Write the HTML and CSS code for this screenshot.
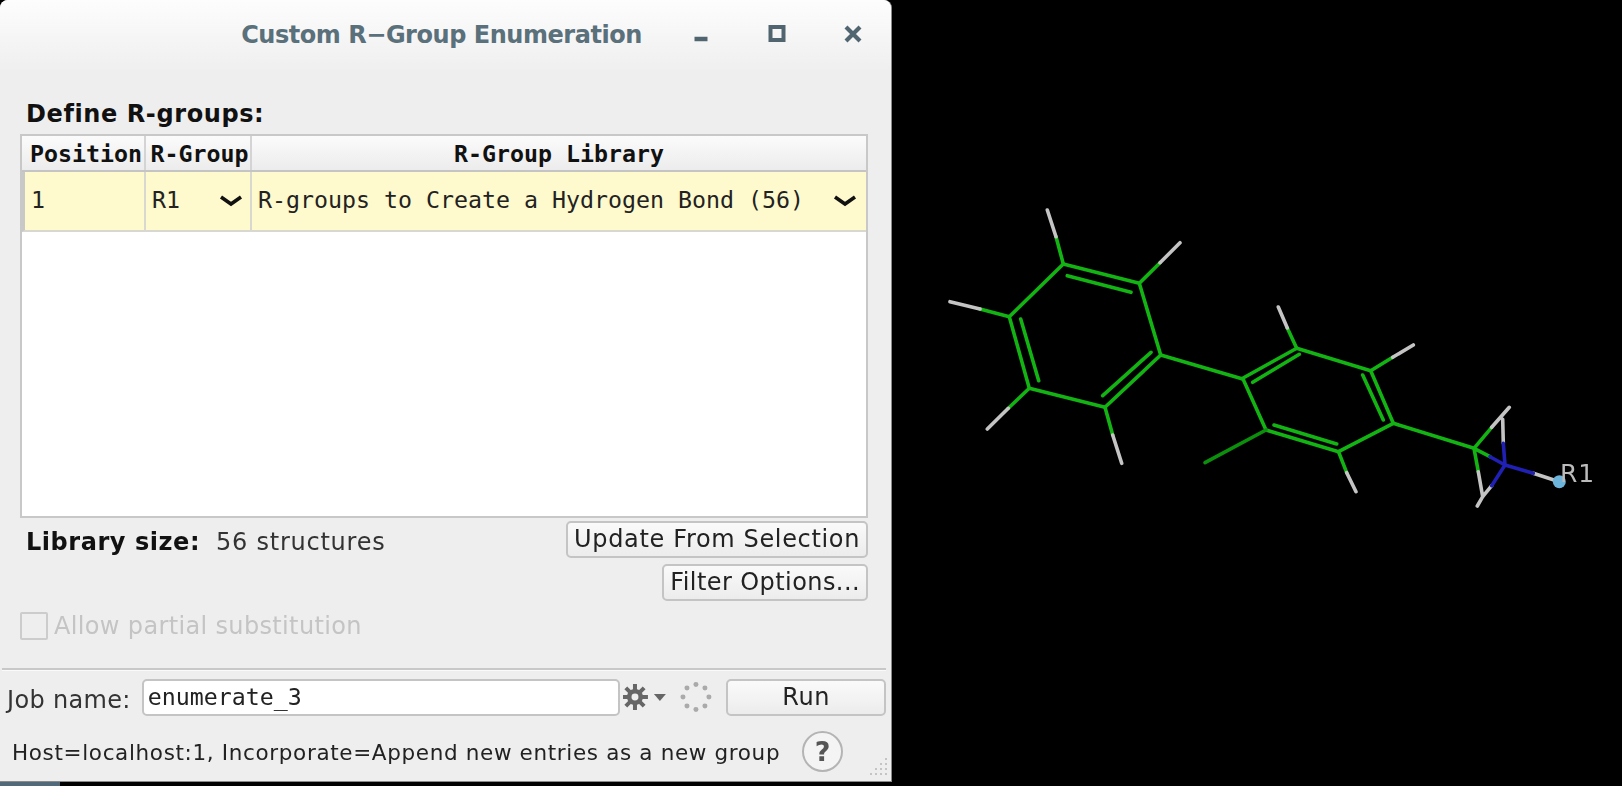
FILE: index.html
```html
<!DOCTYPE html>
<html lang="en">
<head>
  <meta charset="UTF-8" />
  <title>Custom R-Group Enumeration</title>
  <link rel="stylesheet" href="styles.css">
</head>
<body>

  <div class="left-column">
    <div class="window">
      <div class="titlebar">
        <span class="title">Custom R&minus;Group Enumeration</span>
        <div class="win-buttons">
          <svg class="win-btn" viewBox="0 0 20 20"><path d="M3.500 15h13" stroke="#50656f" stroke-width="4.500"/></svg>
          <svg class="win-btn" viewBox="0 0 20 20"><rect x="3.500" y="3" width="13" height="13" fill="none" stroke="#50656f" stroke-width="4"/></svg>
          <svg class="win-btn" viewBox="0 0 20 20"><path d="M3 3l14 14M17 3l-14 14" stroke="#50656f" stroke-width="4.200"/></svg>
        </div>
      </div>

      <div class="content">
        <div class="section-label">Define R-groups:</div>

        <div class="table">
          <div class="thead">
            <div class="th col-pos">Position</div>
            <div class="th col-group">R-Group</div>
            <div class="th col-lib">R-Group Library</div>
          </div>
          <div class="row">
            <div class="td col-pos">1</div>
            <div class="td col-group">R1
              <svg class="chevron" viewBox="0 0 24 12"><path d="M2 2l10 7 10-7" fill="none" stroke="#111" stroke-width="3.600"/></svg>
            </div>
            <div class="td col-lib">R-groups to Create a Hydrogen Bond (56)
              <svg class="chevron" viewBox="0 0 24 12"><path d="M2 2l10 7 10-7" fill="none" stroke="#111" stroke-width="3.600"/></svg>
            </div>
          </div>
        </div>

        <div class="library-row">
          <div class="library-size"><b>Library size:</b><span>56 structures</span></div>
          <div class="library-buttons">
            <button class="btn">Update From Selection</button>
            <button class="btn btn-filter">Filter Options...</button>
          </div>
        </div>

        <label class="check-row">
          <span class="checkbox"></span>
          <span>Allow partial substitution</span>
        </label>
      </div>

      <div class="job-bar">
        <span class="job-label">Job name:</span>
        <div class="job-input">enumerate_3</div>
        <svg class="gear" viewBox="0 0 44 28">
          <g fill="#666">
            <circle cx="12" cy="14" r="8"/>
            <path d="M10 1h4v26h-4zM-1 12h26v4H-1z"/>
            <path d="M10 1h4v26h-4zM-1 12h26v4H-1z" transform="rotate(45 12 14)"/>
            <path d="M31 11h12l-6 7z"/>
          </g>
          <circle cx="12" cy="14" r="3.500" fill="#eee"/>
        </svg>
        <svg class="spinner" viewBox="0 0 32 32">
          <g fill="#aaa">
            <circle cx="16" cy="3.500" r="2.500"/><circle cx="25" cy="7" r="2.500"/>
            <circle cx="29" cy="16" r="2.500"/><circle cx="25" cy="25" r="2.500"/>
            <circle cx="16" cy="28.500" r="2.500"/><circle cx="7" cy="25" r="2.500"/>
            <circle cx="3" cy="16" r="2.500"/><circle cx="7" cy="7" r="2.500"/>
          </g>
        </svg>
        <button class="btn btn-run">Run</button>
      </div>

      <div class="status-bar">
        <span class="status-text">Host=localhost:1, Incorporate=Append new entries as a new group</span>
        <span class="help">?</span>
        <svg class="grip" viewBox="0 0 22 22">
          <g fill="#c4c4c4">
            <rect x="18" y="2" width="2" height="2"/>
            <rect x="13" y="7" width="2" height="2"/><rect x="18" y="7" width="2" height="2"/>
            <rect x="8" y="12" width="2" height="2"/><rect x="13" y="12" width="2" height="2"/><rect x="18" y="12" width="2" height="2"/>
            <rect x="3" y="17" width="2" height="2"/><rect x="8" y="17" width="2" height="2"/><rect x="13" y="17" width="2" height="2"/><rect x="18" y="17" width="2" height="2"/>
          </g>
        </svg>
      </div>
    </div>
    <div class="desktop-strip"></div>
  </div>

  <div class="viewer">
    <svg class="molecule" viewBox="892 0 730 786">
      <!-- left ring -->
      <g class="bond-c">
        <path d="M1063.300 264L1139.300 283.300L1160.700 355L1105 407.300L1029.300 388.300L1009.300 316.700Z"/>
        <path d="M1067.300 275.700L1131 292.300M1020.700 319L1038.700 380.700M1151 352.300L1102.700 395.700"/>
        <path d="M1160.700 355L1242.700 379"/>
        <path d="M1063.300 264L1056 236.700M1139.300 283.300L1160 262.700M1009.300 316.700L980 309M1029.300 388.300L1008.300 408.300M1105 407.300L1112.700 435"/>
      </g>
      <g class="bond-h">
        <path d="M1056 236.700L1047.300 210M1160 262.700L1180 242.700M980 309L950 301.700M1008.300 408.300L987.300 429M1112.700 435L1121.700 463.300"/>
      </g>
      <!-- right ring -->
      <g class="bond-c">
        <path d="M1242.700 378.300L1296.700 348.300L1370.700 370.700L1393.300 423.300L1338.500 451.700L1266 430Z"/>
        <path d="M1252.700 382.300L1299.300 354.300M1362.700 375L1383.300 420M1274 425L1336.700 444"/>
        <path d="M1393.300 423.300L1474 448.300"/>
        <path d="M1296.700 348.300L1287.300 328M1370.700 370.700L1392.700 357.300M1338.500 451.700L1346.700 472.700"/>
      </g>
      <path class="bond-dark" d="M1266 430L1205 462.700"/>
      <g class="bond-h">
        <path d="M1287.300 328L1278.300 307M1392.700 357.300L1413.300 345M1346.700 472.700L1356 491.700"/>
      </g>
      <!-- R1 end -->
      <g class="bond-c">
        <path d="M1474 448.300L1491.700 427.300M1474 448.300L1478.300 471.700M1474 448.300L1490 456.700"/>
      </g>
      <g class="bond-h">
        <path d="M1491.700 427.300L1509.300 407.300M1478.300 471.700L1482.700 496.700M1503.300 443.300L1502.700 419.300M1491.700 485.700L1482.700 496.700L1477.300 506M1533.300 473.300L1559.300 481.700"/>
      </g>
      <g class="bond-n">
        <path d="M1490 456.700L1505 465M1505 465L1503.300 443.300M1505 465L1491.700 485.700M1505 465L1533.300 473.300"/>
      </g>
      <circle class="r-dot" cx="1559.300" cy="481.700" r="6.500"/>
      <text class="r-label" x="1560" y="481.500">R1</text>
    </svg>
  </div>

</body>
</html>
```

FILE: styles.css
```css
* {
  box-sizing: border-box;
}

html, body {
  height: 100%;
}

body {
  margin: 0;
  background: #000;
  display: flex;
  overflow: hidden;
  font-family: 'DejaVu Sans', sans-serif;
  font-size: 24px;
  color: #222;
}

.left-column {
  width: 892px;
  flex: none;
}

.window {
  height: 782px;
  display: flex;
  flex-direction: column;
  background: #eeeeee;
  border-right: 1px solid #8a8a8a;
  border-bottom: 1px solid #8a8a8a;
  border-radius: 8px 8px 0 0;
  filter: blur(0.4px);
}

.desktop-strip {
  width: 60px;
  height: 4px;
  background: #52697a;
}

.titlebar {
  height: 70px;
  flex: none;
  position: relative;
  background: linear-gradient(to bottom, #fdfdfd, #efefef);
  border-radius: 8px 8px 0 0;
  display: flex;
  align-items: center;
  justify-content: center;
}

.title {
  font-weight: bold;
  font-size: 24px;
  letter-spacing: -0.46px;
  color: #5a707a;
  margin-right: 8px;
}

.win-buttons {
  position: absolute;
  top: 24px;
  right: 28px;
  display: flex;
  gap: 56px;
}

.win-btn {
  width: 20px;
  height: 20px;
}

.content {
  flex: 1;
  padding: 29px 23px 0 20px;
}

.section-label {
  font-weight: bold;
  letter-spacing: 0.6px;
  margin-left: 6px;
  height: 35px;
  line-height: 31px;
  color: #111;
}

.table {
  height: 384px;
  background: #fff;
  border: 2px solid #c8c8c8;
  font-family: 'DejaVu Sans Mono', monospace;
  font-size: 23.25px;
}

.thead {
  display: flex;
  height: 36px;
  background: linear-gradient(to bottom, #fbfbfb, #ececec);
  border-bottom: 2px solid #c4c4c4;
}

.row {
  display: flex;
  height: 60px;
  background: #fffacd;
  border-bottom: 2px solid #d8d8d0;
  border-left: 3px solid #c8c8c8;
}

.col-pos { width: 124px; }
.col-group { width: 106px; }
.col-lib { flex: 1; }

.row .col-pos { width: 121px; }

.th {
  font-weight: bold;
  color: #111;
  text-align: center;
  line-height: 35px;
  border-right: 2px solid #d4d4d4;
  white-space: nowrap;
}

.th.col-pos {
  text-align: left;
  padding-left: 8px;
}

.th.col-group {
  padding-left: 3px;
}

.th.col-lib { border-right: none; }

.td {
  display: flex;
  align-items: center;
  justify-content: space-between;
  padding: 0 7px 3px 6px;
  color: #222;
  border-right: 2px solid #d8d8d0;
  white-space: nowrap;
}

.td.col-lib {
  border-right: none;
  padding-right: 9px;
}

.chevron {
  width: 24px;
  height: 12px;
  margin-top: 3px;
}

.library-row {
  display: flex;
  justify-content: space-between;
  padding-top: 3px;
}

.library-size {
  margin-left: 6px;
  padding-top: 7px;
  display: flex;
  gap: 16px;
  color: #333;
  letter-spacing: 0.75px;
}

.library-size b {
  color: #111;
  letter-spacing: 0.55px;
}

.library-buttons {
  display: flex;
  flex-direction: column;
  align-items: flex-end;
  gap: 6px;
}

.btn {
  height: 37px;
  padding: 0 6px 2px;
  font-family: 'DejaVu Sans', sans-serif;
  font-size: 24px;
  letter-spacing: 0.65px;
  color: #222;
  background: linear-gradient(to bottom, #fafafa, #ececec);
  border: 2px solid #c4c4c4;
  border-radius: 5px;
  white-space: nowrap;
}

.btn-filter {
  letter-spacing: 0.42px;
}

.check-row {
  display: flex;
  align-items: center;
  gap: 6px;
  margin-top: 11px;
  color: #c4c4c4;
  letter-spacing: 0.35px;
}

.checkbox {
  width: 28px;
  height: 28px;
  border: 2px solid #cccccc;
  border-radius: 2px;
}

.job-bar {
  flex: none;
  height: 62px;
  margin: 0 5px 0 2px;
  padding: 9px 0 0 5px;
  border-top: 2px solid #c8c8c8;
  display: flex;
  align-items: flex-start;
  box-shadow: inset 0 1px 0 #fafafa;
}

.job-label {
  width: 135px;
  padding-top: 7px;
  color: #333;
  letter-spacing: 0.33px;
}

.job-input {
  width: 479px;
  height: 37px;
  padding-left: 4px;
  background: #fff;
  border: 2px solid #c4c4c4;
  border-radius: 5px;
  font-family: 'DejaVu Sans Mono', monospace;
  font-size: 23.25px;
  line-height: 31px;
  color: #222;
}

.gear {
  width: 44px;
  height: 28px;
  margin: 4px 0 0 3px;
}

.spinner {
  width: 32px;
  height: 32px;
  margin: 2px 0 0 14px;
}

.btn-run {
  width: 160px;
  margin-left: 14px;
}

.status-bar {
  flex: none;
  height: 51px;
  display: flex;
  align-items: flex-start;
  position: relative;
  padding-left: 12px;
}

.status-text {
  font-size: 21.5px;
  letter-spacing: 0.65px;
  width: 790px;
  padding-top: 10px;
  white-space: nowrap;
  color: #222;
}

.help {
  width: 41px;
  height: 41px;
  margin-top: 1px;
  border: 2px solid #b4b4b4;
  border-radius: 50%;
  background: #f4f4f4;
  font-weight: bold;
  font-size: 27px;
  line-height: 37px;
  text-align: center;
  color: #555;
}

.grip {
  position: absolute;
  right: 2px;
  bottom: 3px;
  width: 22px;
  height: 22px;
}

.viewer {
  flex: 1;
  height: 100%;
}

.molecule {
  display: block;
  width: 100%;
  height: 100%;
  filter: blur(0.6px);
}

.molecule path {
  fill: none;
  stroke-width: 3.600;
  stroke-linecap: round;
  stroke-linejoin: round;
}

.bond-c path { stroke: #13b313; }
.bond-h path { stroke: #c4c4c4; }
.bond-n path { stroke: #2020b4; }
.molecule .bond-dark { stroke: #0c8f0c; }

.r-dot {
  fill: #6cb4dc;
}

.r-label {
  font-family: 'DejaVu Sans', sans-serif;
  font-size: 25px;
  letter-spacing: 1px;
  fill: #bbbbbb;
}
```
